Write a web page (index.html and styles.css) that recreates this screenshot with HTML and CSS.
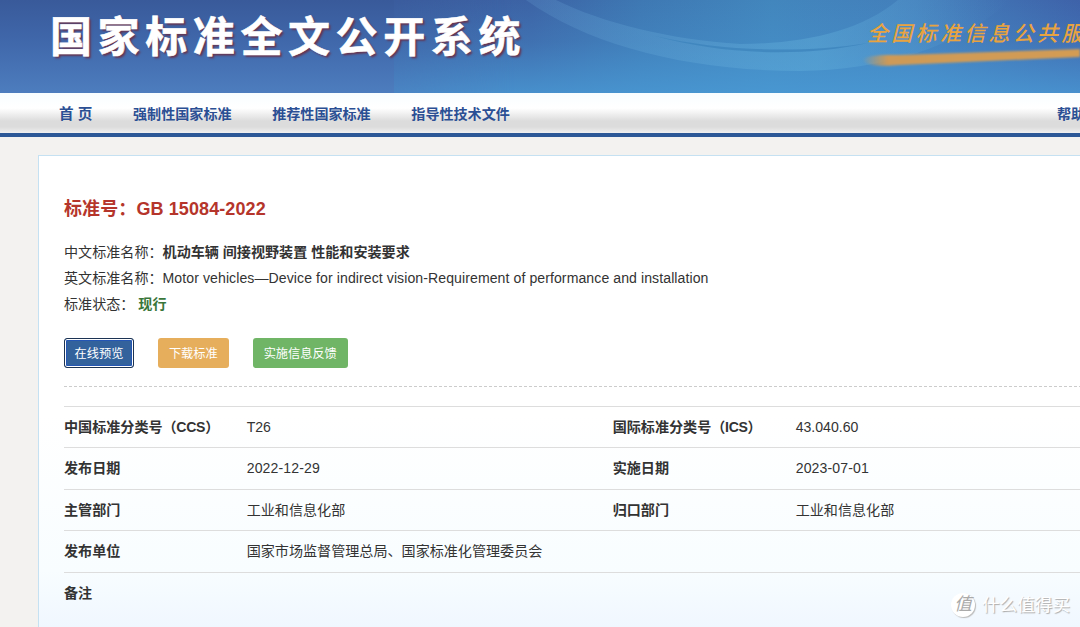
FILE: index.html
```html
<!DOCTYPE html>
<html lang="zh-CN">
<head>
  <meta charset="UTF-8" />
  <meta name="viewport" content="width=device-width, initial-scale=1.0"/>
  <title>国家标准全文公开系统</title>
  <link rel="stylesheet" href="styles.css">
</head>
<body>
  <header class="banner">
    <svg class="banner-art" width="686" height="93" viewBox="394 0 686 93">
      <defs>
        <linearGradient id="sky" x1="0" y1="0" x2="1" y2="0">
          <stop offset="0" stop-color="#3d5fa1"/>
          <stop offset=".2" stop-color="#3c63a5"/>
          <stop offset=".36" stop-color="#3e78b3"/>
          <stop offset=".55" stop-color="#4286bd"/>
          <stop offset=".76" stop-color="#437fbb"/>
          <stop offset="1" stop-color="#3e62a9"/>
        </linearGradient>
        <linearGradient id="glow" x1="0" y1="0" x2="0" y2="1">
          <stop offset="0" stop-color="#4a9bd6" stop-opacity="0"/>
          <stop offset=".45" stop-color="#4a9bd6" stop-opacity=".25"/>
          <stop offset="1" stop-color="#4a9bd6" stop-opacity=".8"/>
        </linearGradient>
        <linearGradient id="band" x1="0" y1="0" x2="1" y2="0">
          <stop offset="0" stop-color="#6ea9da" stop-opacity=".2"/>
          <stop offset=".6" stop-color="#64b2dc" stop-opacity=".4"/>
          <stop offset="1" stop-color="#64a8dc" stop-opacity="0"/>
        </linearGradient>
        <linearGradient id="brush" x1="0" y1="0" x2="1" y2="0">
          <stop offset="0" stop-color="#d79b4f" stop-opacity="0"/>
          <stop offset=".12" stop-color="#cd9a58"/>
          <stop offset="1" stop-color="#d49c53"/>
        </linearGradient>
        <filter id="soft" x="-5%" y="-50%" width="110%" height="200%"><feGaussianBlur stdDeviation=".8"/></filter>
      </defs>
      <rect x="394" width="686" height="93" fill="url(#sky)"/>
      <rect x="394" width="686" height="93" fill="url(#glow)"/>
      <path d="M526 0C590 46 690 71 800 71C880 70 960 48 1010 0H898C860 32 800 44 740 44C670 40 600 22 556 0Z" fill="url(#band)"/>
      <path d="M655 36C720 54 800 58 868 43C800 54 720 51 655 36Z" fill="#3b82ba" opacity=".7"/>
      <path d="M862 60C868 55 880 55 900 55L1080 49V57L900 65C878 67 866 65 862 60Z" fill="url(#brush)" filter="url(#soft)"/>
    </svg>
    <h1>国家标准全文公开系统</h1>
    <div class="slogan">全国标准信息公共服</div>
  </header>

  <nav class="nav">
    <a class="home">首 页</a>
    <a>强制性国家标准</a>
    <a>推荐性国家标准</a>
    <a>指导性技术文件</a>
    <a class="help">帮助</a>
  </nav>

  <main class="panel">
    <h2>标准号：GB 15084-2022</h2>
    <div class="info">
      <p>中文标准名称：<b>机动车辆 间接视野装置 性能和安装要求</b></p>
      <p>英文标准名称：<span class="en">Motor vehicles—Device for indirect vision-Requirement of performance and installation</span></p>
      <p>标准状态： <b class="active">现行</b></p>
    </div>
    <div class="buttons">
      <button class="btn btn-primary">在线预览</button>
      <button class="btn btn-warning">下载标准</button>
      <button class="btn btn-success">实施信息反馈</button>
    </div>
    <div class="details">
      <div class="row">
        <b>中国标准分类号<span class="code">（CCS）</span></b><span>T26</span>
        <b>国际标准分类号<span class="code">（ICS）</span></b><span>43.040.60</span>
      </div>
      <div class="row">
        <b>发布日期</b><span class="date">2022-12-29</span>
        <b>实施日期</b><span class="date">2023-07-01</span>
      </div>
      <div class="row">
        <b>主管部门</b><span>工业和信息化部</span>
        <b>归口部门</b><span>工业和信息化部</span>
      </div>
      <div class="row">
        <b>发布单位</b><span>国家市场监督管理总局、国家标准化管理委员会</span>
      </div>
      <div class="row">
        <b>备注</b>
      </div>
    </div>
  </main>

  <div class="watermark"><i>值</i><span>什么值得买</span></div>
</body>
</html>
```
FILE: styles.css
```css
* {
  margin: 0;
  padding: 0;
  box-sizing: border-box;
}

body {
  position: relative;
  height: 627px;
  background: #f3f2f0;
  font-family: "Liberation Sans", "Noto Sans CJK SC", sans-serif;
  font-size: 14.08px;
  color: #333;
  overflow: hidden;
}

/* banner */
.banner {
  position: relative;
  display: flex;
  justify-content: space-between;
  height: 93px;
  padding-left: 50px;
  background: linear-gradient(#395a9a, #3f66a9 40%, #4d7dbe);
  overflow: hidden;
}

.banner-art {
  position: absolute;
  top: 0;
  right: 0;
  -webkit-mask-image: linear-gradient(to right, rgba(0, 0, 0, .45), #000 120px);
  mask-image: linear-gradient(to right, rgba(0, 0, 0, .45), #000 120px);
}

.banner h1 {
  position: relative;
  font-family: "Noto Sans CJK SC", sans-serif;
  font-size: 42px;
  font-weight: 700;
  line-height: 68px;
  letter-spacing: 5.6px;
  white-space: nowrap;
  color: #fff;
  -webkit-text-stroke: .6px #fff;
  text-shadow: 2px 2px 2px #653653;
}

.slogan {
  position: relative;
  flex: none;
  width: 213px;
  font-family: "Noto Sans CJK SC", sans-serif;
  font-size: 21px;
  font-style: italic;
  font-weight: 500;
  line-height: 65px;
  letter-spacing: 3.3px;
  white-space: nowrap;
  color: #e9a33f;
}

/* nav */
.nav {
  display: flex;
  align-items: center;
  gap: 40.6px;
  width: 1150px;
  height: 44px;
  padding: 0 0 1px 59px;
  border-bottom: 4px solid #2c5897;
  background: linear-gradient(#f8fdff, #fff 38%, #dcdcdc 70%, #dcdcdc 85%, #f0f0f0);
}

.nav a {
  font-weight: bold;
  color: #2b4f94;
  white-space: nowrap;
}

.nav .home {
  width: 33.4px;
  font-size: 14.6px;
}

.nav .help {
  margin-left: auto;
  width: 93px;
}

/* content */
.panel {
  width: 1150px;
  height: 472px;
  margin: 18px 0 0 38px;
  padding: 39px 25px 0;
  border: 1px solid #c5e1f2;
  border-bottom: 0;
  background: linear-gradient(#fff 55%, #f8fdff 88%, #f0f7ff);
}

.panel h2 {
  font-size: 18px;
  line-height: 28px;
  letter-spacing: .1px;
  color: #b5352b;
}

.info {
  margin-top: 16px;
  line-height: 26px;
}

.info .en {
  letter-spacing: .08px;
}

.info .active {
  color: #39763a;
}

.buttons {
  display: flex;
  gap: 24px;
  margin-top: 21px;
  padding-bottom: 18px;
  border-bottom: 1px dashed #ccc;
}

.btn {
  height: 30px;
  padding: 0 11px 1px;
  border: 0;
  border-radius: 3px;
  font-family: inherit;
  font-size: 12.2px;
  color: #fff;
}

.btn-primary {
  border: 1px solid #1c3353;
  padding: 0 9.6px 1px;
  background: #33629c;
  box-shadow: inset 0 0 0 1px #fff, inset 0 0 0 2px #2456b4;
}

.btn-warning {
  background: #e6ae5c;
}

.btn-success {
  background: #70b566;
}

.details {
  margin-top: 19px;
}

.row {
  display: grid;
  grid-template-columns: 182.7px 366px 183px 366px;
  height: 41.4px;
  border-top: 1px solid #ddd;
  line-height: 41px;
  white-space: nowrap;
}

.row .code {
  letter-spacing: -.3px;
}

.row .date {
  letter-spacing: .12px;
}

.watermark {
  position: absolute;
  right: 10px;
  bottom: 9px;
  display: flex;
  align-items: center;
  gap: 7px;
  font-size: 17.6px;
  line-height: 26px;
  color: #fff;
  text-shadow: 1px 1px 1px #aaa;
}

.watermark i {
  width: 24px;
  height: 24px;
  border-radius: 50%;
  background: #fff;
  box-shadow: 1px 1px 1px #bbb;
  line-height: 23px;
  text-align: center;
  color: #aaa;
  text-shadow: none;
}
```
